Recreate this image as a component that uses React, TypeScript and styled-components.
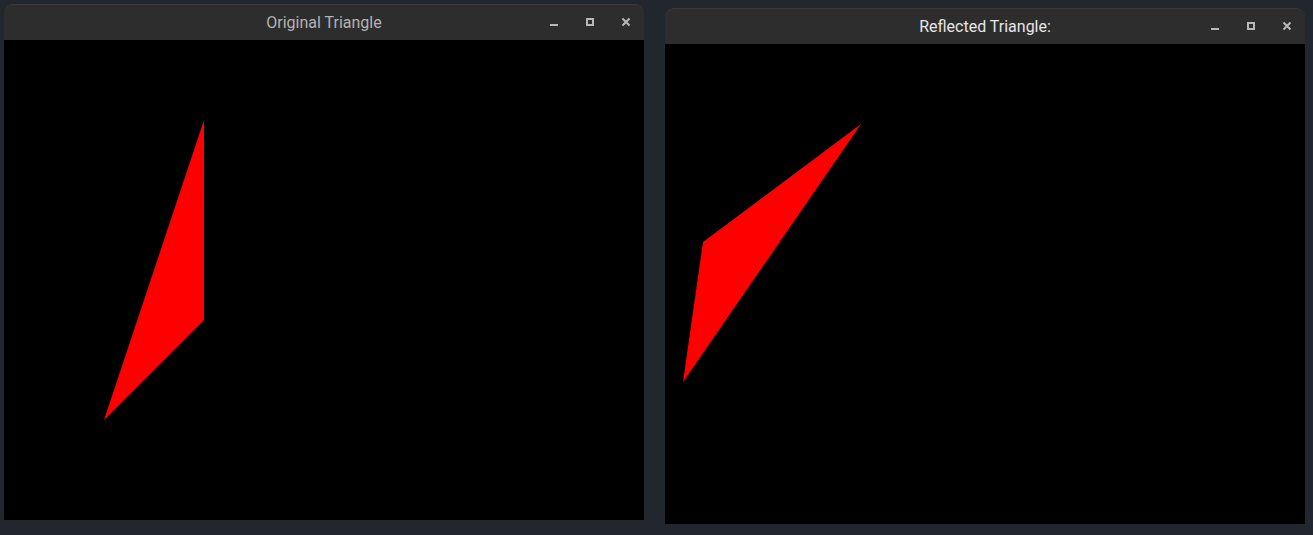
import React from "react";
import styled, { createGlobalStyle } from "styled-components";

const Global = createGlobalStyle`
  html, body { margin: 0; padding: 0; background: #22262d; }
  body { font-family: Roboto, "Noto Sans", "Liberation Sans", sans-serif; }
`;

const Desktop = styled.div`
  width: 1313px;
  height: 535px;
  box-sizing: border-box;
  padding: 4px 0 0 4px;
  display: flex;
  align-items: flex-start;
  gap: 21px;
  background: #22262d;
  overflow: hidden;
`;

const Window = styled.div<{ $offset: number }>`
  margin-top: ${(p) => p.$offset}px;
  display: flex;
  flex-direction: column;
  width: 640px;
`;

const TitleBar = styled.div`
  height: 36px;
  box-sizing: border-box;
  background: #2d2d2d;
  border-radius: 9px 9px 0 0;
  border-top: 1px solid #3a3a3a;
  display: grid;
  grid-template-columns: 1fr auto 1fr;
  align-items: center;
`;

const Title = styled.div<{ $active: boolean }>`
  grid-column: 2;
  font-size: 16px;
  color: ${(p) => (p.$active ? "#e6e6e6" : "#b3b3b3")};
  white-space: nowrap;
  margin-top: -1px;
`;

const Controls = styled.div`
  grid-column: 3;
  justify-self: end;
  display: flex;
  height: 100%;
`;

const ControlButton = styled.div`
  width: 36px;
  height: 100%;
  display: flex;
  align-items: center;
  justify-content: center;
  margin-top: -1px;
`;

const Canvas = styled.svg`
  display: block;
  width: 640px;
  height: 480px;
  background: #000;
`;

const iconColor = "#b8b8b8";

function Buttons() {
  return (
    <Controls>
      <ControlButton>
        <svg width="10" height="10" viewBox="0 0 10 10">
          <rect x="1" y="7" width="8" height="2" fill={iconColor} />
        </svg>
      </ControlButton>
      <ControlButton>
        <svg width="10" height="10" viewBox="0 0 10 10">
          <rect x="2" y="2" width="6" height="6" fill="none" stroke={iconColor} strokeWidth="2" />
        </svg>
      </ControlButton>
      <ControlButton>
        <svg width="10" height="10" viewBox="0 0 10 10">
          <path d="M1.5 1.5 L8.5 8.5 M8.5 1.5 L1.5 8.5" stroke={iconColor} strokeWidth="2" />
        </svg>
      </ControlButton>
    </Controls>
  );
}

function TriangleWindow({
  title,
  active,
  offset,
  points,
}: {
  title: string;
  active: boolean;
  offset: number;
  points: string;
}) {
  return (
    <Window $offset={offset}>
      <TitleBar>
        <Title $active={active}>{title}</Title>
        <Buttons />
      </TitleBar>
      <Canvas viewBox="0 0 640 480">
        <polygon points={points} fill="#ff0000" />
      </Canvas>
    </Window>
  );
}

export default function App() {
  return (
    <>
      <Global />
      <Desktop>
        <TriangleWindow
          title="Original Triangle"
          active={false}
          offset={0}
          points="200,80 200,280 100,380"
        />
        <TriangleWindow
          title="Reflected Triangle:"
          active={true}
          offset={4}
          points="196,80 38,198 18,338"
        />
      </Desktop>
    </>
  );
}
